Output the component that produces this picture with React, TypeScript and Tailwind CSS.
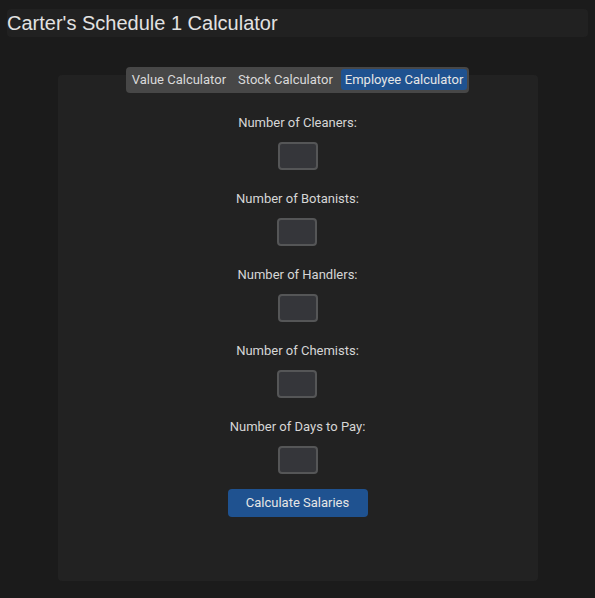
import { useState } from "react";

const TABS = ["Value Calculator", "Stock Calculator", "Employee Calculator"];

const FIELDS = [
  "Number of Cleaners:",
  "Number of Botanists:",
  "Number of Handlers:",
  "Number of Chemists:",
  "Number of Days to Pay:",
];

export default function App() {
  const [tab, setTab] = useState(2);

  return (
    <div className="min-h-screen bg-[#1b1b1b] pt-[9px] pb-[17px] font-['Roboto',sans-serif]">
      {/* Header */}
      <div className="mx-[7px] flex h-[28px] items-center rounded-[4px] bg-[#212121]">
        <h1 className="font-['Liberation_Sans',Arial,sans-serif] text-[20px] leading-none text-[#e2e2e2]">
          Carter's Schedule 1 Calculator
        </h1>
      </div>

      <div className="mt-[30px] flex flex-col items-center">
        {/* Tabs */}
        <div className="relative z-10 flex gap-[4px] rounded-[4px] bg-[#474747] p-[2px] pb-[3px]">
          {TABS.map((t, i) => (
            <button
              key={t}
              onClick={() => setTab(i)}
              className={
                "h-[21px] rounded-[3px] px-[4px] text-[13px] leading-none " +
                (tab === i ? "bg-[#1f5290] text-[#e6e6e6]" : "text-[#dadada]")
              }
            >
              {t}
            </button>
          ))}
        </div>

        {/* Panel */}
        <div className="mx-auto -mt-[18px] flex h-[506px] w-[480px] flex-col items-center rounded-[4px] bg-[#222222] pt-[40px]">
          {FIELDS.map((f) => (
            <div key={f} className="mb-[21px] flex flex-col items-center">
              <label className="text-[13px] leading-[16px] text-[#d6d6d6]">{f}</label>
              <input
                type="text"
                className="mt-[11px] h-[28px] w-[40px] rounded-[4px] border-2 border-[#555657] bg-[#35363a] text-[13px] text-white outline-none"
              />
            </div>
          ))}
          <button className="-mt-[6px] h-[28px] w-[140px] rounded-[4px] bg-[#1f5290] text-[13px] text-[#e6e6e6]">
            Calculate Salaries
          </button>
        </div>
      </div>
    </div>
  );
}
